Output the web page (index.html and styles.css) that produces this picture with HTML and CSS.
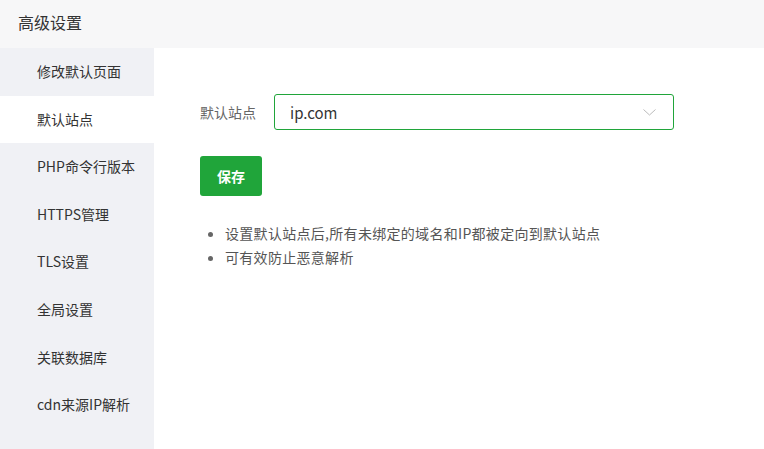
FILE: index.html
```html
<!DOCTYPE html>
<html lang="zh">
<head>
<meta charset="utf-8">
<link rel="stylesheet" href="styles.css">
</head>
<body>
<div class="page">
  <header class="header">高级设置</header>
  <div class="main">
    <nav class="sidebar">
      <div class="nav-item">修改默认页面</div>
      <div class="nav-item active">默认站点</div>
      <div class="nav-item">PHP命令行版本</div>
      <div class="nav-item">HTTPS管理</div>
      <div class="nav-item">TLS设置</div>
      <div class="nav-item">全局设置</div>
      <div class="nav-item">关联数据库</div>
      <div class="nav-item">cdn来源IP解析</div>
    </nav>
    <section class="content">
      <div class="form-row">
        <label class="label">默认站点</label>
        <div class="select">
          <span class="select-value">ip.com</span>
          <svg class="chevron" width="13" height="7" viewBox="0 0 13 7"><path d="M0.5 0.5 L6.5 6 L12.5 0.5" fill="none" stroke="#bbb" stroke-width="1"/></svg>
        </div>
      </div>
      <button class="btn">保存</button>
      <ul class="tips">
        <li>设置默认站点后,所有未绑定的域名和IP都被定向到默认站点</li>
        <li>可有效防止恶意解析</li>
      </ul>
    </section>
  </div>
</div>
</body>
</html>
```
FILE: styles.css
```css
* { box-sizing: border-box; }
html, body { margin: 0; padding: 0; background: #fff; }
body {
  font-family: "Noto Sans CJK SC", "Liberation Sans", sans-serif;
  color: #333;
  width: 764px;
  height: 449px;
  overflow: hidden;
}
.page { display: flex; flex-direction: column; height: 449px; }
.header {
  height: 48px;
  background: #f7f7f8;
  font-size: 16px;
  line-height: 44px;
  padding-left: 18px;
  color: #333;
}
.main { display: flex; flex: 1; }
.sidebar {
  width: 154px;
  background: #f0f1f5;
  display: flex;
  flex-direction: column;
}
.nav-item {
  height: 47.6px;
  line-height: 47.6px;
  padding-left: 37px;
  font-size: 14px;
  color: #333;
  white-space: nowrap;
}
.nav-item.active { background: #fff; }
.content { flex: 1; padding: 46px 0 0 46px; }
.form-row { display: flex; align-items: center; }
.label { font-size: 14px; color: #666; width: 74px; }
.select {
  width: 400px;
  height: 36px;
  border: 1px solid #20a53a;
  border-radius: 3px;
  display: flex;
  align-items: center;
  justify-content: space-between;
  padding: 0 17px 0 15px;
}
.select-value { font-size: 15px; color: #333; }
.chevron { display: block; }
.btn {
  margin-top: 26px;
  width: 62px;
  height: 40px;
  background: #20a53a;
  border: none;
  border-radius: 3px;
  color: #fff;
  font-family: inherit;
  font-size: 14px;
  font-weight: bold;
  padding: 0;
  display: block;
}
.tips {
  margin: 25px 0 0 0;
  padding-left: 25px;
  font-size: 14px;
  color: #555;
  line-height: 24px;
  letter-spacing: 0.3px;
}
.tips li::marker { color: #666; }
```
